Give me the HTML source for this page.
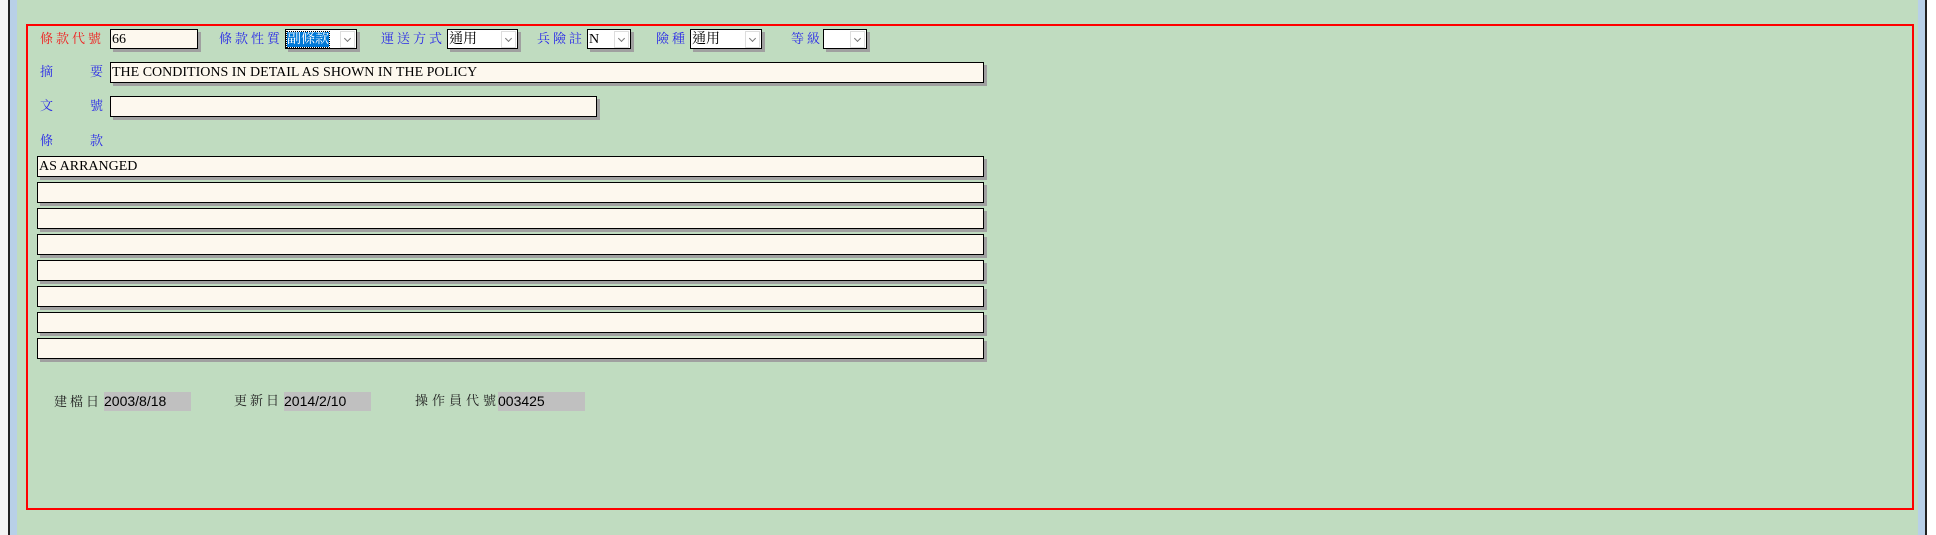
<!DOCTYPE html>
<html><head><meta charset="utf-8"><style>
*{margin:0;padding:0;box-sizing:border-box}
body{width:1936px;height:535px;overflow:hidden;background:#c0dcc0;position:relative;font-family:"Liberation Serif","Noto Serif CJK SC","Noto Sans CJK TC",serif}
.a{position:absolute}
.lb{position:absolute;font-size:13px;color:#2a2ae8;line-height:20px;letter-spacing:3px;font-family:"Liberation Serif","Noto Serif CJK SC",serif}
.in{position:absolute;background:#fdf8ee;border:1px solid #000;box-shadow:3px 3px 0 #a0a0a0;font-size:14px;line-height:19px;padding-left:1px;color:#000;white-space:nowrap;overflow:hidden;font-family:"Liberation Serif","Noto Serif CJK TC",serif}
.sel{position:absolute;background:#fff;border:1px solid #000;box-shadow:3px 3px 0 #a0a0a0;font-size:14px;line-height:19px;padding-left:1px;white-space:nowrap;overflow:hidden;font-family:"Liberation Serif","Noto Serif CJK TC",serif}
.sel .ar{position:absolute;right:1px;top:1px;width:15px;height:17px;border:1px solid #ddd;background:#fff}
.sel .ar:after{content:"";position:absolute;left:4px;top:4px;width:4px;height:4px;border-right:1px solid #777;border-bottom:1px solid #777;transform:rotate(45deg)}
.bl{position:absolute;font-size:13px;color:#222;line-height:20px;letter-spacing:3px}
.gv{position:absolute;background:#c0c0c0;font-family:"Liberation Sans",sans-serif;font-size:14px;line-height:19px;color:#000;height:19px}
</style></head><body>
<div class="a" style="left:0;top:0;width:8px;height:535px;background:#f4f4f4"></div>
<div class="a" style="left:8px;top:0;width:2px;height:535px;background:#222"></div>
<div class="a" style="left:10px;top:0;width:7px;height:535px;background:#b8d0e8"></div>
<div class="a" style="left:1918px;top:0;width:7px;height:535px;background:#b8d0e8"></div>
<div class="a" style="left:1925px;top:0;width:2px;height:535px;background:#222"></div>
<div class="a" style="left:1927px;top:0;width:9px;height:535px;background:#fff"></div>
<div class="a" style="left:26px;top:24px;width:1888px;height:486px;border:2px solid #f00"></div>

<div class="lb" style="left:40px;top:29px;color:#f02020">條款代號</div>
<div class="in" style="left:110px;top:29px;width:88px;height:20px">66</div>
<div class="lb" style="left:219px;top:29px">條款性質</div>
<div class="sel" style="left:285px;top:29px;width:72px;height:20px"><span style="background:#0078d7;color:#fff;outline:1px dotted #000">副條款</span><div class="ar"></div></div>
<div class="lb" style="left:381px;top:29px">運送方式</div>
<div class="sel" style="left:447px;top:29px;width:71px;height:20px">通用<div class="ar"></div></div>
<div class="lb" style="left:537px;top:29px">兵險註</div>
<div class="sel" style="left:587px;top:29px;width:44px;height:20px">N<div class="ar"></div></div>
<div class="lb" style="left:656px;top:29px">險種</div>
<div class="sel" style="left:690px;top:29px;width:72px;height:20px">通用<div class="ar"></div></div>
<div class="lb" style="left:791px;top:29px">等級</div>
<div class="sel" style="left:823px;top:29px;width:44px;height:20px"><div class="ar"></div></div>

<div class="lb" style="left:40px;top:62px">摘</div><div class="lb" style="left:90px;top:62px">要</div>
<div class="in" style="left:110px;top:62px;width:874px;height:21px">THE CONDITIONS IN DETAIL AS SHOWN IN THE POLICY</div>
<div class="lb" style="left:40px;top:96px">文</div><div class="lb" style="left:90px;top:96px">號</div>
<div class="in" style="left:110px;top:96px;width:487px;height:21px"></div>
<div class="lb" style="left:40px;top:131px">條</div><div class="lb" style="left:90px;top:131px">款</div>

<div class="in" style="left:37px;top:156px;width:947px;height:21px">AS ARRANGED</div>
<div class="in" style="left:37px;top:182px;width:947px;height:21px"></div>
<div class="in" style="left:37px;top:208px;width:947px;height:21px"></div>
<div class="in" style="left:37px;top:234px;width:947px;height:21px"></div>
<div class="in" style="left:37px;top:260px;width:947px;height:21px"></div>
<div class="in" style="left:37px;top:286px;width:947px;height:21px"></div>
<div class="in" style="left:37px;top:312px;width:947px;height:21px"></div>
<div class="in" style="left:37px;top:338px;width:947px;height:21px"></div>

<div class="bl" style="left:54px;top:392px">建檔日</div>
<div class="gv" style="left:104px;top:392px;width:87px">2003/8/18</div>
<div class="bl" style="left:234px;top:391px">更新日</div>
<div class="gv" style="left:284px;top:392px;width:87px">2014/2/10</div>
<div class="bl" style="left:415px;top:391px;letter-spacing:4px">操作員代號</div>
<div class="gv" style="left:498px;top:392px;width:87px">003425</div>
</body></html>
